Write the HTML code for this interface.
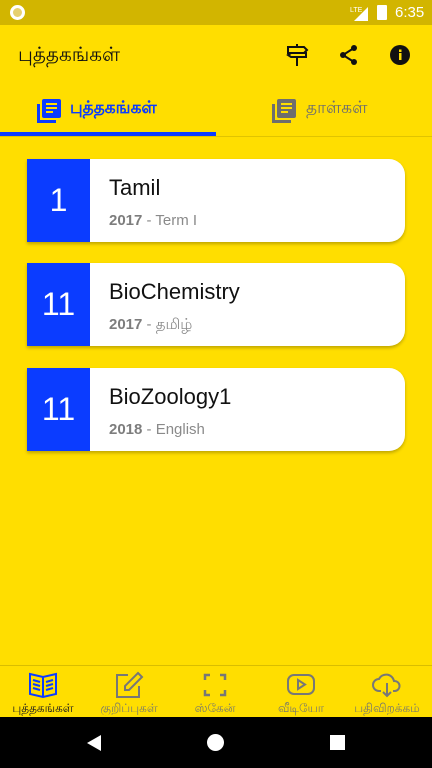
<!DOCTYPE html>
<html><head><meta charset="utf-8"><style>
*{margin:0;padding:0;box-sizing:border-box}
body{width:432px;height:768px;background:#ffde00;font-family:"Liberation Sans","Noto Sans CJK SC",sans-serif;position:relative;overflow:hidden}
.status{position:absolute;top:0;left:0;width:432px;height:25px;background:#d2b500;color:#fff}
.abs{position:absolute}
.card{position:absolute;left:27px;width:378px;height:83px;background:#fff;border-radius:0 16px 16px 0;box-shadow:0 2px 3px rgba(0,0,0,.25)}
.num{position:absolute;left:0;top:0;width:63px;height:83px;background:#0b3cff;color:#fff;font-size:32px;display:flex;align-items:center;justify-content:center}
.title{position:absolute;left:82px;top:16px;font-size:22px;color:#111}
.sub{position:absolute;left:82px;top:53px;font-size:15px;color:#8a8a8a}
.sub b{color:#7d7d7d}
.nav{position:absolute;top:665px;left:0;width:432px;height:52px;border-top:1px solid #d9bd00}
.ni{position:absolute;top:0;width:86px;text-align:center;font-size:12px;color:#7a7a6a}
.ni svg{display:block;margin:5px auto 2px}
</style></head><body>
<div class="status">
<div class="abs" style="left:10px;top:5px;width:15px;height:15px;border-radius:50%;border:3px solid #fff;background:#e6d070"></div>
<svg class="abs" style="left:350px;top:4px" width="20" height="17"><text x="0" y="8" font-size="7" fill="#fff" font-family="Liberation Sans">LTE</text><polygon points="4,17 18,3 18,17" fill="#fff"/></svg>
<div class="abs" style="left:377px;top:5px;width:10px;height:15px;background:#fff;border-radius:1px"></div>
<div class="abs" style="left:395px;top:4px;font-size:15px">6:35</div>
</div>
<div class="abs" style="left:18px;top:44px;font-size:20px;color:#111">புத்தகங்கள்</div>
<svg class="abs" style="left:285px;top:43px" width="24" height="24" fill="none" stroke="#111" stroke-width="2"><path d="M12 1v3M12 14v9M3 4h16l3 3-3 3H3zM21 10H6l-3 2 3 2h15z"/></svg>
<svg class="abs" style="left:338px;top:44px" width="22" height="22" fill="#111"><circle cx="16" cy="4" r="3"/><circle cx="5" cy="11" r="3"/><circle cx="16" cy="18" r="3"/><path d="M16 4L5 11l11 7" stroke="#111" stroke-width="2" fill="none"/></svg>
<svg class="abs" style="left:389px;top:44px" width="22" height="22"><circle cx="11" cy="11" r="10" fill="#111"/><rect x="10" y="9" width="2.5" height="7" fill="#ffde00"/><rect x="10" y="5.5" width="2.5" height="2.5" fill="#ffde00"/></svg>
<svg class="abs" style="left:36px;top:98px" width="26" height="26"><rect x="1" y="6" width="3" height="19" fill="#0b3cff"/><rect x="1" y="22" width="19" height="3" fill="#0b3cff"/><rect x="6" y="1" width="19" height="19" rx="2" fill="#0b3cff"/><path d="M10 6h11M10 10h11M10 14h7" stroke="#ffde00" stroke-width="2"/></svg>
<div class="abs" style="left:70px;top:98px;font-size:17px;font-weight:bold;color:#0b3cff">புத்தகங்கள்</div>
<svg class="abs" style="left:271px;top:98px" width="26" height="26"><rect x="1" y="6" width="3" height="19" fill="#6e6e6e"/><rect x="1" y="22" width="19" height="3" fill="#6e6e6e"/><rect x="6" y="1" width="19" height="19" rx="2" fill="#6e6e6e"/><path d="M10 6h11M10 10h11M10 14h7" stroke="#ffde00" stroke-width="2"/></svg>
<div class="abs" style="left:306px;top:98px;font-size:17px;color:#6e6e6e">தாள்கள்</div>
<div class="abs" style="left:0;top:132px;width:216px;height:4px;background:#0b3cff"></div>
<div class="abs" style="left:0;top:136px;width:432px;height:1px;background:#e0c400"></div>

<div class="card" style="top:159px"><div class="num">1</div><div class="title">Tamil</div><div class="sub"><b>2017</b> - Term I</div></div>
<div class="card" style="top:263px"><div class="num">11</div><div class="title">BioChemistry</div><div class="sub"><b>2017</b> - தமிழ்</div></div>
<div class="card" style="top:368px"><div class="num">11</div><div class="title">BioZoology1</div><div class="sub"><b>2018</b> - English</div></div>

<div class="nav">
<div class="ni" style="left:0;color:#0b3cff"><svg width="30" height="28" fill="none" stroke="#0b3cff" stroke-width="2"><path d="M2 3l13 3 13-3v20l-13 3-13-3zM15 6v20M5 9l7 2M5 13l7 2M5 17l7 2M18 11l7-2M18 15l7-2M18 19l7-2"/></svg><span style="color:#112">புத்தகங்கள்</span></div>
<div class="ni" style="left:86px"><svg width="30" height="28" fill="none" stroke="#777" stroke-width="2"><path d="M14 4H3v22h22V15M24 2l4 4-13 13H11v-4z"/></svg>குறிப்புகள்</div>
<div class="ni" style="left:172px"><svg width="30" height="28" fill="none" stroke="#777" stroke-width="2.5"><path d="M5 9V4h5M20 4h5v5M25 19v5h-5M10 24H5v-5"/></svg>ஸ்கேன்</div>
<div class="ni" style="left:258px"><svg width="30" height="28" fill="none" stroke="#777" stroke-width="2"><rect x="2" y="4" width="26" height="19" rx="6"/><path d="M12 9v9l7-4.5z"/></svg>வீடியோ</div>
<div class="ni" style="left:344px"><svg width="30" height="28" fill="none" stroke="#777" stroke-width="2"><path d="M9 20H7a6 6 0 010-12 8 8 0 0115 2 5 5 0 011 10h-2M15 12v13M11 21l4 4 4-4"/></svg>பதிவிறக்கம்</div>
</div>
<div class="abs" style="left:0;top:717px;width:432px;height:51px;background:#000"></div>
<svg class="abs" style="left:86px;top:734px" width="16" height="18"><polygon points="15,1 15,17 1,9" fill="#fff"/></svg>
<div class="abs" style="left:207px;top:734px;width:17px;height:17px;border-radius:50%;background:#fff"></div>
<div class="abs" style="left:330px;top:735px;width:15px;height:15px;background:#fff"></div>
</body></html>
